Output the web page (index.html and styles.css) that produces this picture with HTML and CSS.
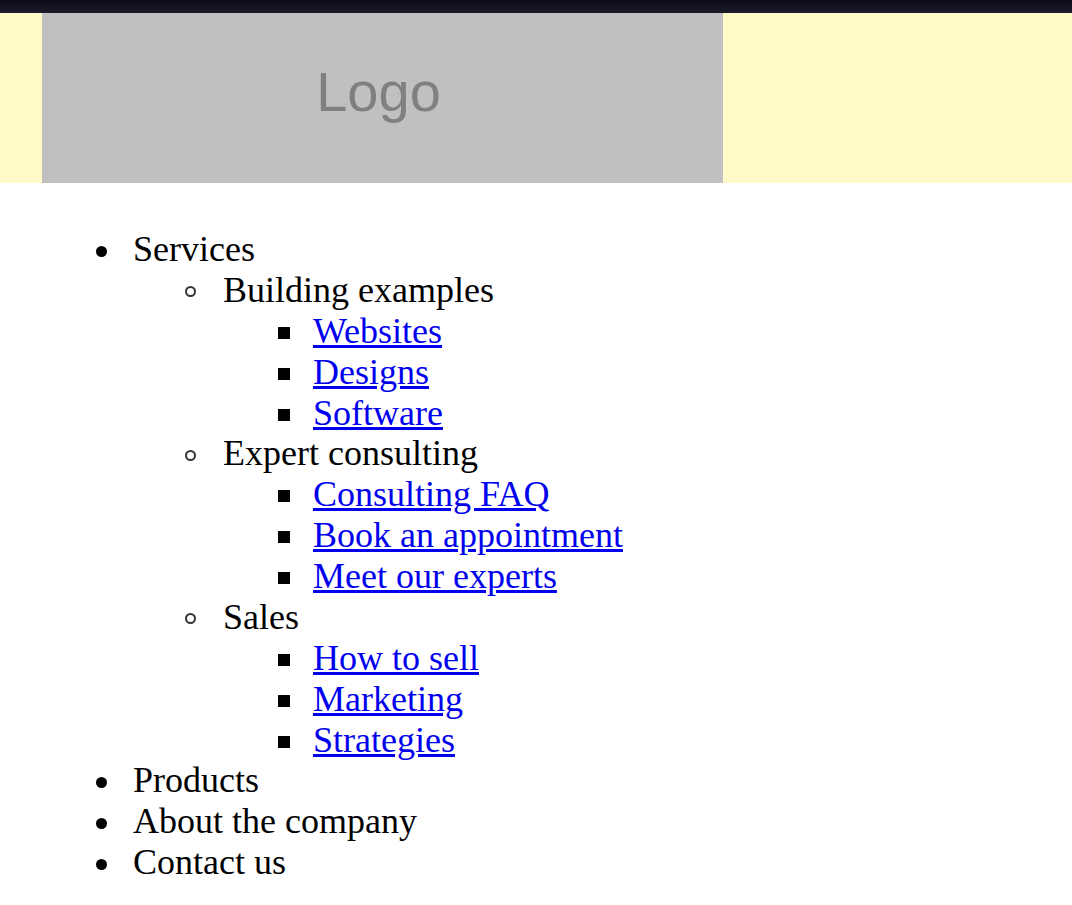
FILE: index.html
```html
<!DOCTYPE html>
<html>
<head>
<meta charset="utf-8">
<link rel="stylesheet" href="styles.css">
</head>
<body>
<div class="topbar"></div>
<header class="header">
  <div class="logo">Logo</div>
</header>
<nav class="nav">
  <ul class="l1">
    <li>Services
      <ul class="l2">
        <li>Building examples
          <ul class="l3">
            <li><a href="#">Websites</a></li>
            <li><a href="#">Designs</a></li>
            <li><a href="#">Software</a></li>
          </ul>
        </li>
        <li>Expert consulting
          <ul class="l3">
            <li><a href="#">Consulting FAQ</a></li>
            <li><a href="#">Book an appointment</a></li>
            <li><a href="#">Meet our experts</a></li>
          </ul>
        </li>
        <li>Sales
          <ul class="l3">
            <li><a href="#">How to sell</a></li>
            <li><a href="#">Marketing</a></li>
            <li><a href="#">Strategies</a></li>
          </ul>
        </li>
      </ul>
    </li>
    <li>Products</li>
    <li>About the company</li>
    <li>Contact us</li>
  </ul>
</nav>
</body>
</html>
```

FILE: styles.css
```css
html, body {
  margin: 0;
  padding: 0;
  background: #ffffff;
}
body {
  font-family: "Liberation Serif", "Times New Roman", serif;
}
.topbar {
  height: 13px;
  background: linear-gradient(#0b0b16, #1c1c2a);
}
.header {
  height: 170px;
  background: #fffac8;
  padding-left: 42px;
  display: flex;
}
.logo {
  width: 681px;
  height: 170px;
  background: #c0c0c0;
  color: #808080;
  font-family: "Liberation Sans", Arial, sans-serif;
  font-size: 56px;
  display: flex;
  align-items: center;
  justify-content: center;
  padding-bottom: 14px;
  padding-right: 8px;
  box-sizing: border-box;
}
.nav {
  padding-left: 43px;
}
.nav ul {
  margin: 0;
  padding-left: 90px;
  font-size: 36px;
  line-height: 40.87px;
  color: #000;
  list-style: none;
}
.nav .l1 {
  margin-top: 46px;
}
.nav li {
  position: relative;
}
.nav li::before {
  content: "";
  position: absolute;
  left: -37px;
  top: 16.5px;
  width: 11px;
  height: 11px;
  box-sizing: border-box;
}
.nav .l1 > li::before {
  background: #000;
  border-radius: 50%;
}
.nav .l2 > li::before {
  border: 2px solid #333;
  border-radius: 50%;
  left: -38px;
}
.nav .l3 > li::before {
  background: #000;
  width: 12px;
  height: 12px;
  left: -35px;
  top: 16px;
}
.nav a {
  color: #0000ee;
  text-decoration: underline;
}
```
